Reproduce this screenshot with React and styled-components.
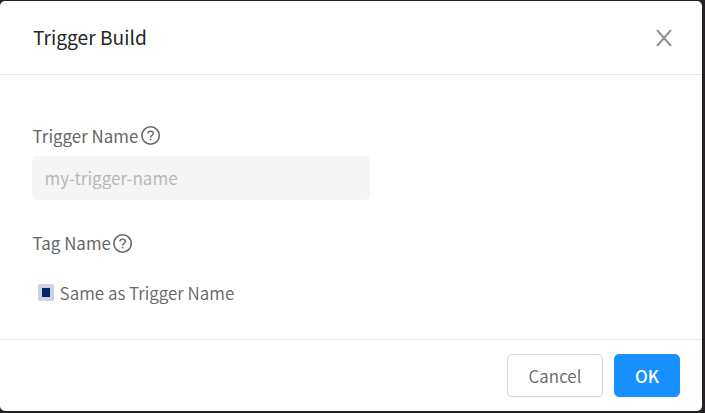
import React from "react";
import styled, { createGlobalStyle } from "styled-components";

const GlobalStyle = createGlobalStyle`
  * { box-sizing: border-box; }
  body { margin: 0; background: #242224; overflow: hidden; }
  body, button, input { font-family: "Source Sans Pro", "Noto Sans CJK SC", sans-serif; }
`;

const Backdrop = styled.div`
  width: 705px;
  height: 413px;
  padding: 1px 3px 2px 0;
  background: #242224;
`;

const Dialog = styled.section`
  display: flex;
  flex-direction: column;
  width: 702px;
  height: 410px;
  background: #fff;
  border-radius: 5px;
  color: #666;
`;

const Header = styled.header`
  display: flex;
  align-items: center;
  justify-content: space-between;
  height: 74px;
  padding: 0 30px 0 33px;
  border-bottom: 1px solid #e8e8e8;
`;

const Title = styled.h1`
  margin: -2px 0 0;
  color: #262626;
  font-size: 19.2px;
  font-weight: 400;
  line-height: 30px;
`;

const CloseButton = styled.button`
  display: flex;
  padding: 0;
  border: 0;
  background: none;
  color: #8c8c8c;
`;

const Body = styled.div`
  flex: 1;
  padding: 48px 32px 0;
`;

const Label = styled.label`
  display: flex;
  align-items: center;
  gap: 2.35px;
  height: 26px;
  padding-left: 0.6px;
  font-size: 16.9px;
  line-height: 26px;
  white-space: nowrap;
`;

const NameInput = styled.input`
  display: block;
  width: 338px;
  height: 44px;
  margin: 7px 0 30px;
  padding: 0 12px 1px 12.4px;
  border: 0;
  border-radius: 5px;
  background: #f5f5f5;
  color: #b8b8b8;
  font-size: 17px;
`;

const CheckRow = styled.label`
  display: flex;
  align-items: center;
  gap: 5.6px;
  height: 26px;
  margin-top: 24px;
  padding-left: 6px;
  font-size: 17px;
  font-weight: 350;
  line-height: 26px;
`;

const CheckMark = styled.span`
  width: 16px;
  height: 17px;
  margin-bottom: 2px;
  border: 4px solid #cbd3e3;
  border-radius: 2px;
  background: #002766;
`;

const Footer = styled.footer`
  display: flex;
  justify-content: flex-end;
  gap: 11px;
  height: 72px;
  padding: 14px 22px 0;
  border-top: 1px solid #e8e8e8;
`;

const Button = styled.button`
  width: ${({ $primary }) => ($primary ? "66px" : "96px")};
  height: 43px;
  padding: 0;
  border: 1px solid ${({ $primary }) => ($primary ? "#1890ff" : "#d9d9d9")};
  border-radius: 5px;
  background: ${({ $primary }) => ($primary ? "#1890ff" : "#fff")};
  color: ${({ $primary }) => ($primary ? "#fff" : "#666")};
  box-shadow: 0 2px 0 rgba(0, 0, 0, 0.025);
  font-size: 17px;
  font-weight: ${({ $primary }) => ($primary ? 500 : 350)};
  line-height: 26px;
`;

const HelpSvg = styled.svg`
  margin-top: ${({ $shift = 0 }) => $shift}px;
`;

const HelpIcon = ({ shift }) => (
  <HelpSvg $shift={shift} width="20" height="20" viewBox="0 0 20 20" fill="none" stroke="#666" strokeWidth="1.6">
    <circle cx="9.6" cy="9.5" r="8.7" />
    <path d="M6.9 7.6C6.9 5.9 7.9 5.1 9.6 5.1S12.3 5.9 12.3 7.4C12.3 9.5 9.6 9.3 9.6 11.6" strokeWidth="1.4" />
    <circle cx="9.6" cy="13.6" r="0.9" fill="#666" stroke="none" />
  </HelpSvg>
);

const CloseIcon = () => (
  <svg width="16" height="16" viewBox="0 0 16 16" fill="none" stroke="currentColor" strokeWidth="1.9">
    <path d="M1 0L15 16M15 0L1 16" />
  </svg>
);

export default function App() {
  return (
    <>
      <GlobalStyle />
      <Backdrop>
        <Dialog role="dialog">
          <Header>
            <Title>Trigger Build</Title>
            <CloseButton aria-label="Close"><CloseIcon /></CloseButton>
          </Header>
          <Body>
            <Label>Trigger Name<HelpIcon shift={-1} /></Label>
            <NameInput disabled value="my-trigger-name" />
            <Label>Tag Name<HelpIcon shift={1} /></Label>
            <CheckRow><CheckMark />Same as Trigger Name</CheckRow>
          </Body>
          <Footer>
            <Button>Cancel</Button>
            <Button $primary>OK</Button>
          </Footer>
        </Dialog>
      </Backdrop>
    </>
  );
}
